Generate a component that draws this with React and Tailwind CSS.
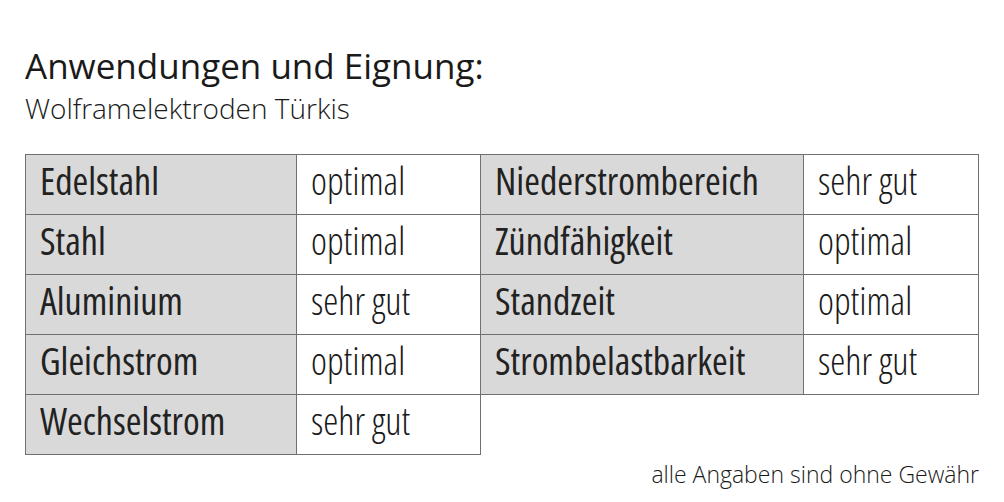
const leftRows = [
  ['Edelstahl', 'optimal'],
  ['Stahl', 'optimal'],
  ['Aluminium', 'sehr gut'],
  ['Gleichstrom', 'optimal'],
  ['Wechselstrom', 'sehr gut'],
];

const rightRows = [
  ['Niederstrombereich', 'sehr gut'],
  ['Zündfähigkeit', 'optimal'],
  ['Standzeit', 'optimal'],
  ['Strombelastbarkeit', 'sehr gut'],
];

const Table = ({ rows, labelW, valueW, className }) => (
  <div className={`flex flex-col border-t border-[#707070] ${className}`}>
    {rows.map(([label, value]) => (
      <div key={label} className="flex">
        <div
          className={`${labelW} h-[60px] bg-[#d9d9d9] border-r border-b border-[#707070] pl-[14px] pt-[6px] text-[38px] leading-[38px] font-normal text-[#222]`}
          style={{ fontStretch: 'condensed' }}
        >
          {label}
        </div>
        <div
          className={`${valueW} h-[60px] bg-white border-r border-b border-[#707070] pl-[14px] pt-[6px] text-[38px] leading-[38px] font-light text-[#1a1a1a]`}
          style={{ fontStretch: 'condensed' }}
        >
          {value}
        </div>
      </div>
    ))}
  </div>
);

export default function App() {
  return (
    <div
      className="w-[1004px] h-[502px] bg-white pl-[25px] pt-[48px] text-[#1a1a1a]"
      style={{ fontFamily: '"Open Sans", sans-serif' }}
    >
      <h1 className="text-[35px] leading-[35px] font-normal">Anwendungen und Eignung:</h1>
      <p className="mt-[11px] text-[28px] leading-[28px] font-light">Wolframelektroden Türkis</p>

      <div className="mt-[32px] flex items-start">
        <Table rows={leftRows} labelW="w-[271px]" valueW="w-[184px]" className="border-l" />
        <Table rows={rightRows} labelW="w-[323px]" valueW="w-[175px]" />
      </div>

      <p className="mt-[8px] w-[954px] text-right text-[23px] leading-[23px] font-light">
        alle Angaben sind ohne Gewähr
      </p>
    </div>
  );
}
